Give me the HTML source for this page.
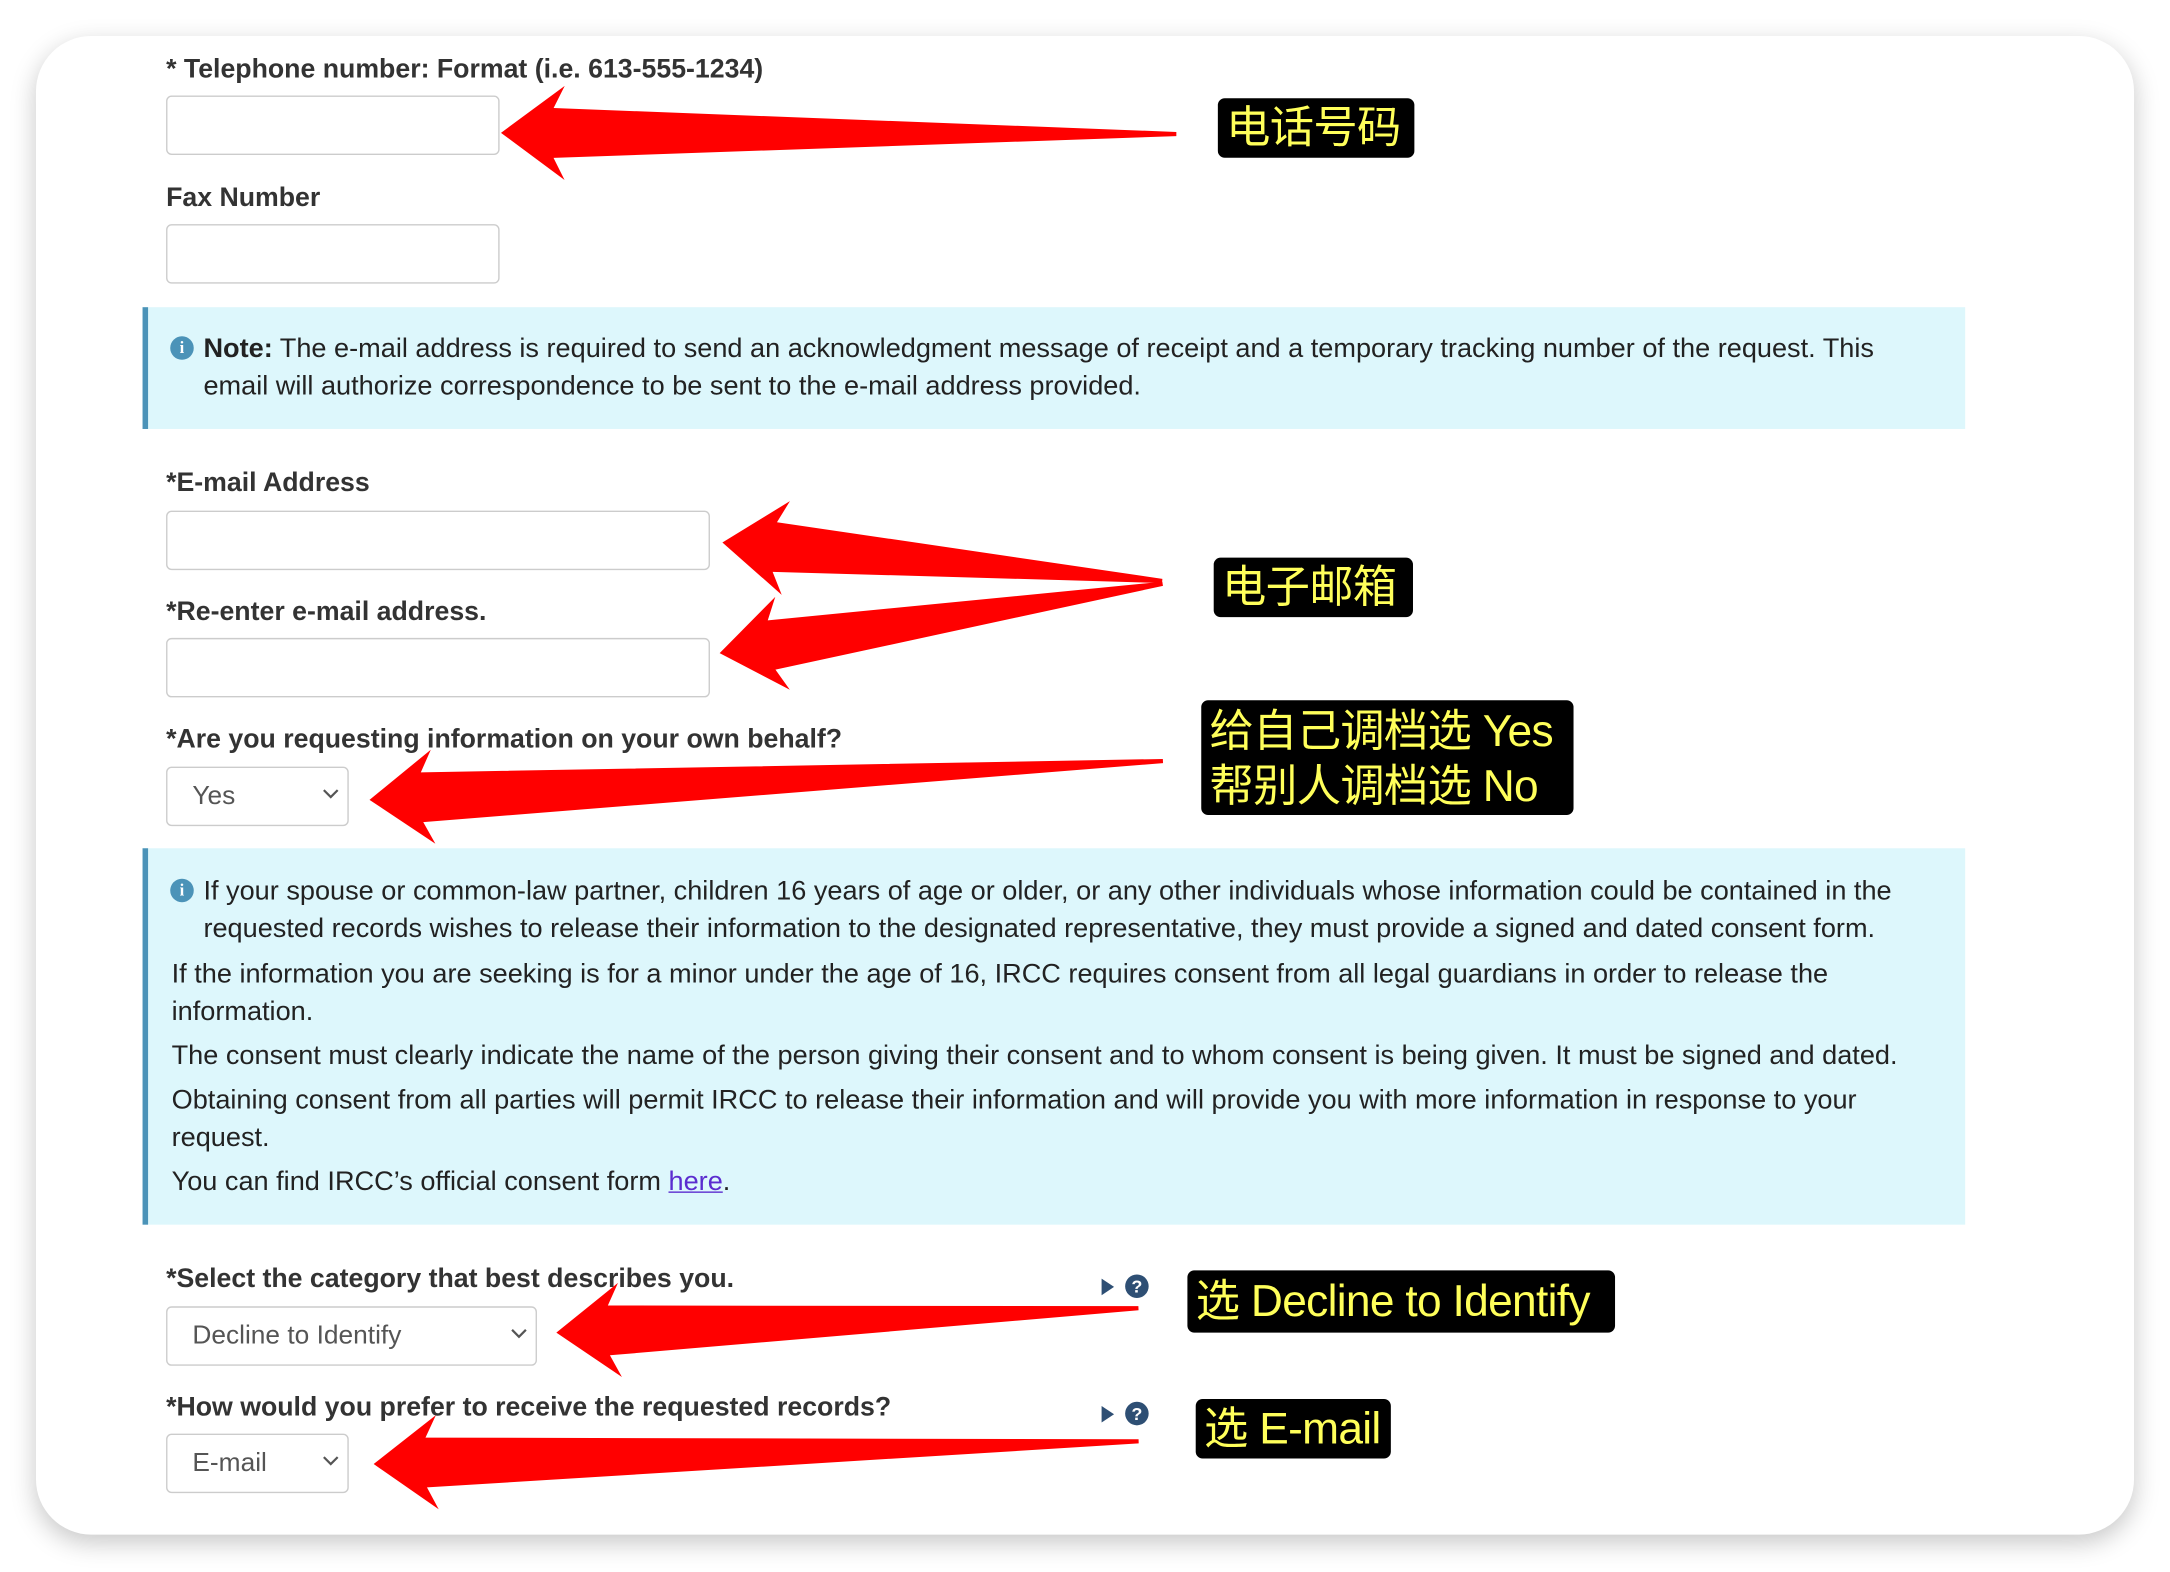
<!DOCTYPE html>
<html><head><meta charset="utf-8"><style>
html,body{margin:0;padding:0;width:2170px;height:1572px;overflow:hidden;background:#fff}
#s{position:absolute;left:0;top:0;width:1568px;height:1136px;transform:scale(1.38393,1.3838);transform-origin:0 0;font-family:"Liberation Sans","Noto Sans CJK SC",sans-serif;color:#222}
.card{position:absolute;left:26px;top:26px;width:1516px;height:1083px;border-radius:40px;background:#fff;box-shadow:0 6px 18px rgba(0,0,0,.22)}
.a{position:absolute;white-space:nowrap}
.lb{font-weight:bold;font-size:19.3px;color:#333;margin-top:2px}
.in{position:absolute;border:1.3px solid #ccc;border-radius:4px;background:#fff;box-sizing:border-box}
.sel{font-size:19px;color:#555;margin-top:1px}
.box{position:absolute;left:103px;width:1317px;background:#ddf7fc;border-left:4px solid #4b93b8;box-sizing:border-box}
.t{font-size:19.6px;color:#222;line-height:27px;margin-top:1px}
.ic{position:absolute;width:17px;height:17px;border-radius:50%;background:#4b93b8;color:#fff;font-size:12px;font-weight:bold;text-align:center;line-height:17px;font-family:"Liberation Serif",serif}
.tag{position:absolute;background:#000;color:#ffff5a;border-radius:5px;font-family:"Liberation Sans","Noto Sans CJK SC",sans-serif;font-size:32px;line-height:43px;padding:0 6px;white-space:nowrap;letter-spacing:-0.5px}
.q{position:absolute;width:17px;height:17px;border-radius:50%;background:#2e4f74;color:#fff;font-size:13px;font-weight:bold;text-align:center;line-height:17px}
.tri{position:absolute;width:0;height:0;border-left:9px solid #2e4f74;border-top:6px solid transparent;border-bottom:6px solid transparent}
</style></head><body><div id="s">
<div class="card"></div>

<div class="a lb" style="left:120px;top:38px">* Telephone number: Format (i.e. 613-555-1234)</div>
<div class="in" style="left:120px;top:69px;width:241px;height:43px"></div>
<div class="a lb" style="left:120px;top:131px">Fax Number</div>
<div class="in" style="left:120px;top:162px;width:241px;height:43px"></div>

<div class="box" style="top:222px;height:88px"></div>
<div class="ic" style="left:123px;top:243px">i</div>
<div class="a t" style="left:147px;top:238px"><b>Note:</b> The e-mail address is required to send an acknowledgment message of receipt and a temporary tracking number of the request. This<br>email will authorize correspondence to be sent to the e-mail address provided.</div>

<div class="a lb" style="left:120px;top:337px">*E-mail Address</div>
<div class="in" style="left:120px;top:369px;width:393px;height:43px"></div>
<div class="a lb" style="left:120px;top:430px">*Re-enter e-mail address.</div>
<div class="in" style="left:120px;top:461px;width:393px;height:43px"></div>
<div class="a lb" style="left:120px;top:522px">*Are you requesting information on your own behalf?</div>
<div class="in" style="left:120px;top:554px;width:132px;height:43px"></div>
<div class="a sel" style="left:139px;top:564px">Yes</div>

<div class="box" style="top:613px;height:272px"></div>
<div class="ic" style="left:123px;top:635px">i</div>
<div class="a t" style="left:147px;top:630px">If your spouse or common-law partner, children 16 years of age or older, or any other individuals whose information could be contained in the<br>requested records wishes to release their information to the designated representative, they must provide a signed and dated consent form.</div>
<div class="a t" style="left:124px;top:690px">If the information you are seeking is for a minor under the age of 16, IRCC requires consent from all legal guardians in order to release the<br>information.</div>
<div class="a t" style="left:124px;top:749px">The consent must clearly indicate the name of the person giving their consent and to whom consent is being given. It must be signed and dated.</div>
<div class="a t" style="left:124px;top:781px">Obtaining consent from all parties will permit IRCC to release their information and will provide you with more information in response to your<br>request.</div>
<div class="a t" style="left:124px;top:840px">You can find IRCC’s official consent form <span style="color:#5b2ccf;text-decoration:underline">here</span>.</div>

<div class="a lb" style="left:120px;top:912px">*Select the category that best describes you.</div>
<div class="in" style="left:120px;top:944px;width:268px;height:43px"></div>
<div class="a sel" style="left:139px;top:954px">Decline to Identify</div>
<div class="a lb" style="left:120px;top:1005px">*How would you prefer to receive the requested records?</div>
<div class="in" style="left:120px;top:1036px;width:132px;height:43px"></div>
<div class="a sel" style="left:139px;top:1046px">E-mail</div>

<svg style="position:absolute;left:0;top:0" width="1568" height="1136">
<g fill="none" stroke="#555" stroke-width="1.6"><polyline points="234,571 239,576 244,571"/><polyline points="370,961 375,966 380,961"/><polyline points="234,1053 239,1058 244,1053"/></g>
<g fill="#ff0000">
<g transform="translate(362,96) rotate(0.1)"><polygon points="0,0 46,-34 38,-18 488,-1.5 488,1.5 38,18 46,34"/></g>
<g transform="translate(522,392) rotate(5)"><polygon points="0,0 46,-34 38,-18 319,-1.5 319,1.5 38,18 46,34"/></g>
<g transform="translate(520,472) rotate(-8.9)"><polygon points="0,0 46,-34 38,-18 324,-1.5 324,1.5 38,18 46,34"/></g>
<g transform="translate(267,578) rotate(-2.8)"><polygon points="0,0 46,-34 38,-18 574,-1.5 574,1.5 38,18 46,34"/></g>
<g transform="translate(402,963) rotate(-2.4)"><polygon points="0,0 46,-34 38,-18 421,-1.5 421,1.5 38,18 46,34"/></g>
<g transform="translate(270,1058) rotate(-1.7)"><polygon points="0,0 46,-34 38,-18 553,-1.5 553,1.5 38,18 46,34"/></g>
</g></svg>

<div class="tri" style="left:796px;top:924px"></div><div class="q" style="left:813px;top:921px">?</div>
<div class="tri" style="left:796px;top:1016px"></div><div class="q" style="left:813px;top:1013px">?</div>

<div class="tag" style="left:880px;top:71px;width:130px">电话号码</div>
<div class="tag" style="left:877px;top:403px;width:132px">电子邮箱</div>
<div class="tag" style="left:868px;top:506px;width:257px;line-height:40px;padding-top:2px;height:81px;font-size:32px">给自己调档选 Yes<br>帮别人调档选 No</div>
<div class="tag" style="left:858px;top:918px;width:297px;height:45px;line-height:45px">选 Decline to Identify</div>
<div class="tag" style="left:864px;top:1011px;width:129px">选 E-mail</div>
</div></body></html>
